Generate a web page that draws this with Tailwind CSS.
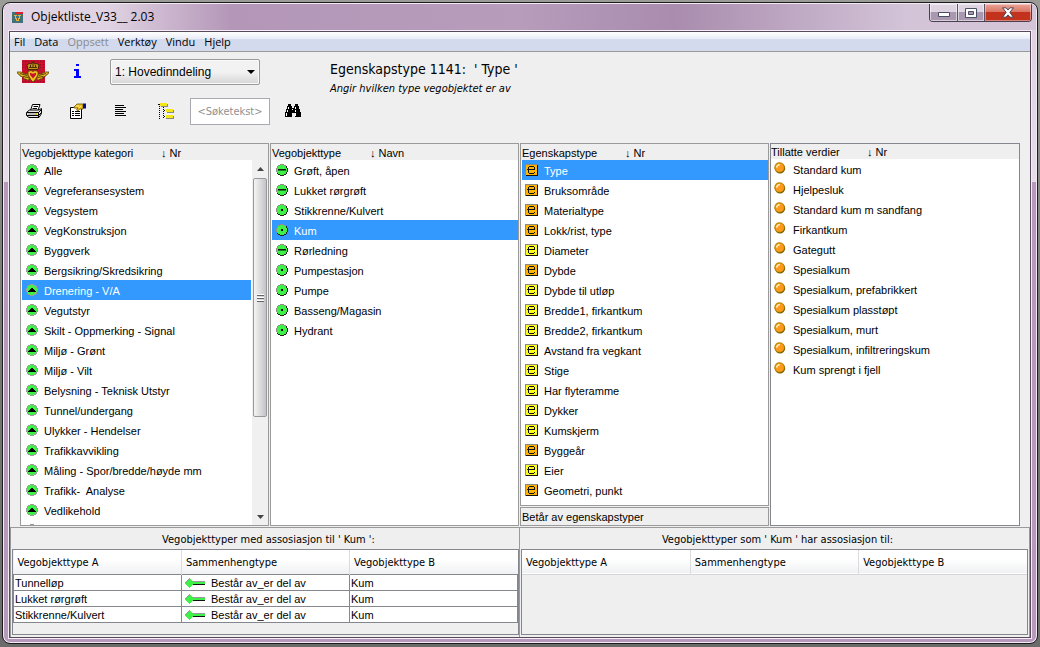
<!DOCTYPE html>
<html lang="no">
<head>
<meta charset="utf-8">
<title>Objektliste_V33__ 2.03</title>
<script src="https://cdn.jsdelivr.net/npm/@tailwindcss/browser@4"></script>
</head>
<body class="flex h-screen flex-col overflow-hidden bg-linear-to-b from-[#9b9b98] via-[#777] to-[#6b6b6b] px-[2px] pt-[2px] pb-[3px] font-['Liberation_Sans',sans-serif] text-[11px] leading-5 text-black">

<svg class="hidden" aria-hidden="true">
  <symbol id="cat" viewBox="0 0 12 12" shape-rendering="crispEdges">
    <path d="M4 0h4v1h2v1h1v2h1v4h-1v2h-1v1H8v1H4v-1H2v-1H1V8H0V4h1V2h1V1h2z" fill="#9c9c9c"/>
    <path d="M4 1h4v1h2v2h1v4h-1v2H8v1H4v-1H2V8H1V4h1V2h2z" fill="#3ff048"/>
    <path d="M5 4h2v1h1v1h1v1h1v1H2V7h1V6h1V5h1z" fill="#000"/>
  </symbol>
  <symbol id="ball" viewBox="0 0 12 12" shape-rendering="crispEdges">
    <path d="M4 0h4v1h2v1h1v2h1v4h-1v2h-1v1H8v1H4v-1H2v-1H1V8H0V4h1V2h1V1h2z" fill="#222"/>
    <path d="M4 0h4v1h2v1H9v1H2v6H1V8H0V4h1V2h1V1h2z" fill="#8d8d8d"/>
    <path d="M4 1h4v1h2v2h1v4h-1v2H8v1H4v-1H2V8H1V4h1V2h2z" fill="#3ff048"/>
  </symbol>
  <symbol id="line" viewBox="0 0 12 12" shape-rendering="crispEdges">
    <use href="#ball"/><path d="M2 5h8v1H2z" fill="#111"/><path d="M2 6h8v1H2z" fill="#1f7a24"/>
  </symbol>
  <symbol id="dot" viewBox="0 0 12 12" shape-rendering="crispEdges">
    <use href="#ball"/><path d="M5 5h2v2H5z" fill="#000"/>
  </symbol>
  <symbol id="e" viewBox="0 0 13 12" shape-rendering="crispEdges">
    <path d="M0 0h13v12H0z" fill="#111"/><path d="M0 0h13v1H1v11H0z" fill="#888"/><path d="M1 1h11v10H1z" fill="currentColor"/>
    <path d="M4 2h5v1H4zM3 3h1v6H3zM9 3h1v3H9zM2 5h8v1H2zM9 8h1v1H9zM4 9h5v1H4z" fill="#111"/>
  </symbol>
  <symbol id="val" viewBox="0 0 12 12">
    <circle cx="6" cy="6.2" r="5.2" fill="#7a6400"/><circle cx="5.4" cy="5.4" r="5.1" fill="#b98800"/><circle cx="5.6" cy="5.7" r="4.1" fill="#ff9a1c"/>
    <path d="M2.6 5.6Q3 3 5.8 2.5" fill="none" stroke="#fff3c4" stroke-width="1.4"/>
  </symbol>
  <symbol id="assoc" viewBox="0 0 22 12" shape-rendering="crispEdges">
    <path d="M9 4h12v1H9z" fill="#999"/><path d="M8 5h13v2H8z" fill="#3ff048"/><path d="M9 7h12v1H9z" fill="#111"/>
    <path d="M5 1h1v1h1v1h1v1h1v1h1v2H9v1H8v1H7v1H6v1H5v-1H4V9H3V8H2V7H1V5h1V4h1V3h1V2h1z" fill="#3ff048"/>
    <path d="M1 5h1V4h1V3h1V2h1V1h1v1H5v1H4v1H3v1H2v1H1z" fill="#999"/>
  </symbol>
</svg>

<div class="flex min-h-0 flex-1 flex-col rounded-lg border border-[#1c1c1c] bg-linear-to-b from-[#ddd0e0] from-0% via-[#e6dde9] via-28% to-[#b79abb] to-28% px-[5px] pb-1 shadow-[inset_0_0_0_1px_#f2ebf4]">

  <!-- Title bar -->
  <header class="-mx-1 mt-px flex h-[26px] shrink-0 items-start overflow-hidden rounded-t-md bg-[#b79cbc]">
    <div class="flex h-full w-full items-start bg-linear-to-r from-[#e0d3e3] from-10% via-[#b497b8] via-22% to-transparent to-50%">
      <svg class="mt-2 ml-2 h-[11px] w-[11px] shrink-0" viewBox="0 0 11 11" shape-rendering="crispEdges" aria-hidden="true">
        <path d="M0 0h11v11H0z" fill="#3f7377"/><path d="M3 0h8v2H3z" fill="#e02030"/><path d="M2 3h3v1H4v2h1v2h1V6h1V4H6V3h3v1H8v3H7v2H4V7H3V4H2z" fill="#e8b040"/>
      </svg>
      <h1 class="ml-2 shrink-0 pt-[3px] font-['Open_Sans',sans-serif] text-xs leading-5">Objektliste_V33__ 2.03</h1>
      <div class="ml-auto flex h-full w-1/2 items-start justify-end bg-linear-to-r from-transparent via-[#a98cae] via-30% to-[#d3c4d8] to-75% pr-1">
        <div class="flex h-[18px] overflow-hidden rounded-b-[4px] border border-t-0 border-[#4b3e50]">
          <button aria-label="Minimer" class="flex w-7 items-center justify-center border-r border-[#5f5164] bg-linear-to-b from-[#ddd3e1] from-50% to-[#aa98b0] to-50% shadow-[inset_0_0_0_1px_#ffffff88]">
            <svg class="mt-1 h-[5px] w-3" viewBox="0 0 12 5"><path d="M.5.5h11v4H.5z" fill="#fff" stroke="#4a4f63"/></svg>
          </button>
          <button aria-label="Maksimer" class="flex w-[27px] items-center justify-center border-r border-[#5f5164] bg-linear-to-b from-[#ddd3e1] from-50% to-[#aa98b0] to-50% shadow-[inset_0_0_0_1px_#ffffff88]">
            <svg class="h-[10px] w-3" viewBox="0 0 12 10"><path d="M.5.5h11v9H.5z" fill="#fff" stroke="#4a4f63"/><path d="M3.5 3.5h5v3h-5z" fill="#aa98b0" stroke="#4a4f63"/></svg>
          </button>
          <button aria-label="Lukk" class="flex w-[46px] items-center justify-center bg-linear-to-b from-[#eaa598] from-0% via-[#d8705f] via-50% to-[#c2321c] to-50% shadow-[inset_0_0_0_1px_#ffffff66]">
            <svg class="h-[11px] w-3" viewBox="0 0 12 11"><path d="M.6.8H4L6 3 8 .8h3.4L7.900 5.400 11.400 10.200H8L6 7.900 4 10.200H.6L4.100 5.400z" fill="#fff" stroke="#4a4556"/></svg>
          </button>
        </div>
      </div>
    </div>
  </header>

  <div class="flex min-h-0 flex-1 flex-col border border-[#f3edf5]">
  <main class="flex min-h-0 flex-1 flex-col border border-[#584a5c] bg-[#efefef]">

    <!-- Menu -->
    <nav class="flex h-5 shrink-0 items-center gap-[9px] border-b border-[#9a9a9a] bg-linear-to-b from-white from-0% via-[#e9edf6] via-35% to-[#d3daee] to-40% pl-1 font-['Open_Sans',sans-serif] text-[11px] leading-4">
      <button>Fil</button><button>Data</button><button disabled class="text-[#8b8b8b]">Oppsett</button><button>Verktøy</button><button>Vindu</button><button>Hjelp</button>
    </nav>

    <!-- Toolbar -->
    <div class="flex h-[91px] shrink-0 pt-[6px]">
      <div class="w-80 shrink-0">
        <div class="flex h-[27px] items-center pl-[7px]">
          <svg class="h-6 w-8" viewBox="0 0 32 24" role="img" aria-label="Statens vegvesen">
            <path d="M5 0h23v23H5z" fill="#c8102e"/>
            <path d="M5 1.500h23M5 4.500h23M5 7.500h23M5 18.500h23M5 21.500h23" stroke="#8d0d22" stroke-dasharray="1 2"/>
            <path d="M0 12h4l4 2h3v2l1 2v2h-2l-1-1H7l-1-2-3-1v-1l-2-1zM32 12h-4l-4 2h-3v2l-1 2v2h2l1-1h2l1-2 3-1v-1l2-1z" fill="#e8b822" stroke="#5c4300" stroke-width=".8"/>
            <path d="M3 13.500l7 2M6 16.500l5 1M29 13.500l-7 2M26 16.500l-5 1" stroke="#4d3800" stroke-width=".9"/>
            <path d="M11 9.500L10 5l2-1.500 2.500.5L16 1.500 17.500 4l2.500-.5L22 5l-1 4.500z" fill="#c4951a" stroke="#3d2200" stroke-width=".9"/>
            <path d="M12 7.500h8M16 2v5M13.500 5v2M18.500 5v2" stroke="#3d2200" stroke-width=".9"/>
            <path d="M11 11.500l3-1 2 1 2-1 3 1v3.500l-3 5-2 2-2-2-3-5z" fill="#f0c020" stroke="#5c4300" stroke-width=".8"/>
            <path d="M13 12.800l3 1 3-1v2L16 18.500 13 14.800z" fill="#c4122f"/>
          </svg>
          <button aria-label="Info" class="ml-[25px]"><svg class="h-4 w-[7px]" viewBox="0 0 7 16" shape-rendering="crispEdges"><path d="M2 0h3v2H2zM0 5h5v7h2v2H0v-2h2V7H0z" fill="#00f"/></svg></button>
          <div class="relative ml-[29px]">
            <select aria-label="Inndeling" class="block h-[26px] w-[150px] appearance-none rounded-[2px] border border-[#9a9a9a] bg-linear-to-b from-[#f2f2f2] from-50% to-[#d6d6d6] pl-1 text-xs shadow-[inset_0_0_0_1px_#fafafa]"><option>1: Hovedinndeling</option></select>
            <svg class="pointer-events-none absolute top-[11px] right-[5px] h-1 w-2" viewBox="0 0 8 4"><path d="M0 0h8L4 4z"/></svg>
          </div>
        </div>
        <div class="mt-[13px] flex h-[27px] items-center pl-4">
          <button aria-label="Skriv ut"><svg class="mb-px h-4 w-4" viewBox="0 0 16 16">
            <path d="M4.500 7.500L6.500 1.500h7.500L12 7.500z" fill="#fff" stroke="#000"/><path d="M7.500 3.500h4.500M6.500 5.500h4.500" stroke="#000"/>
            <path d="M.5 9.500l3-2.500h9.500l2.500-1.500v5l-2.500 4H3l-2.500-2z" fill="#e4e4e4" stroke="#000"/>
            <path d="M1 9.500h11.500l2.500-2.500M1 12.500h11.500l2.500-2.500M12.500 9.500v5" fill="none" stroke="#000"/><path d="M2 11h7" stroke="#999"/><path d="M9 11h2" stroke="#d8b800" stroke-width="1.500"/>
          </svg></button>
          <button aria-label="Egenskaper" class="ml-7"><svg class="mb-px h-4 w-4" viewBox="0 0 16 16">
            <path d="M.5 4.500h11v11H.5z" fill="#fff" stroke="#000"/><path d="M2 8.500h2M2 10.500h2M2 12.500h2M5 8.500h5M5 10.500h5M5 12.500h5" stroke="#000"/>
            <path d="M4 4l3-3h6v5H9.500L8 8 6.500 7 8 5H4z" fill="#f2c21a" stroke="#6a5200" stroke-width=".8"/><path d="M6 3h3M9 5l2-2" stroke="#fff1a0" stroke-width=".8"/><path d="M13 .5h3v5h-3z" fill="#00108c"/>
          </svg></button>
          <button aria-label="Liste" class="ml-7"><svg class="mb-px h-4 w-4" viewBox="0 0 16 16" shape-rendering="crispEdges"><path d="M1 2h9v1H1zM1 4h11v1H1zM1 6h8v1H1zM1 8h11v1H1zM1 10h9v1H1zM1 12h11v1H1z"/></svg></button>
          <button aria-label="Tre" class="ml-7"><svg class="mb-px h-4 w-4" viewBox="0 0 16 16" shape-rendering="crispEdges">
            <path d="M1.500 1v15M5.500 4v11" stroke="#000" stroke-dasharray="1 1"/><path d="M0 1.500h3M6 7.500h2M6 13.500h2" stroke="#000" stroke-dasharray="1 1"/>
            <path d="M3 1h7v3H3zM9 7h7v3H9zM8 13h8v3H8z" fill="#888"/><path d="M2 0h7v3H2zM8 6h7v3H8zM8 12h7v3H8z" fill="#f5e616"/>
          </svg></button>
          <input type="text" aria-label="Søketekst" placeholder="&lt;Søketekst&gt;" class="ml-4 h-[27px] w-20 border border-[#a9a9b0] bg-white px-1 text-center font-['DejaVu_Sans_Condensed','DejaVu_Sans',sans-serif] text-[11px] placeholder:text-[#909090]">
          <button aria-label="Søk" class="ml-[15px]"><svg class="mb-px h-[14px] w-4" viewBox="0 0 16 14" shape-rendering="crispEdges">
            <path d="M3 0h3v2h1v2h2V2h1V0h3v2h1v3h1v3h1v5h-6V9H7v4H0V8h1V5h1V2h1z"/><path d="M3 3h1v2H3zM2 6h1v2H2zM1 9h1v3H1zM10 3h1v2h-1zM10 6h1v2h-1zM10 9h1v3h-1zM7 5h1v1H7z" fill="#fff"/>
          </svg></button>
        </div>
      </div>
      <div class="font-['DejaVu_Sans_Condensed','DejaVu_Sans',sans-serif]">
        <h2 class="pt-px text-sm leading-5 whitespace-pre">Egenskapstype 1141:  ' Type '</h2>
        <p class="text-[11px] leading-5 italic">Angir hvilken type vegobjektet er av</p>
      </div>
    </div>

    <!-- Object lists -->
    <div class="grid min-h-0 flex-1 grid-cols-4 px-[10px] [&_button]:flex [&_button]:h-5 [&_button]:w-full [&_button]:items-center [&_button]:gap-[6px] [&_button]:pt-px [&_button]:pl-1 [&_button]:text-left [&_button]:whitespace-pre [&_li_svg]:mb-[2px] [&_li_svg]:h-3 [&_li_svg]:w-3 [&_li_svg]:shrink-0">

      <section class="mr-px flex min-h-0 flex-col border border-[#9a9a9a]">
        <h3 class="flex h-4 shrink-0 items-center pt-px pl-px"><span class="w-[139px]">Vegobjekttype kategori</span><span>↓ Nr</span></h3>
        <div class="flex min-h-0 flex-1 bg-white pl-px">
          <ul class="min-w-0 flex-1 overflow-hidden">
            <li><button><svg><use href="#cat"/></svg>Alle</button></li>
            <li><button><svg><use href="#cat"/></svg>Vegreferansesystem</button></li>
            <li><button><svg><use href="#cat"/></svg>Vegsystem</button></li>
            <li><button><svg><use href="#cat"/></svg>VegKonstruksjon</button></li>
            <li><button><svg><use href="#cat"/></svg>Byggverk</button></li>
            <li><button><svg><use href="#cat"/></svg>Bergsikring/Skredsikring</button></li>
            <li class="bg-[#3399ff] text-white"><button><svg><use href="#cat"/></svg>Drenering - V/A</button></li>
            <li><button><svg><use href="#cat"/></svg>Vegutstyr</button></li>
            <li><button><svg><use href="#cat"/></svg>Skilt - Oppmerking - Signal</button></li>
            <li><button><svg><use href="#cat"/></svg>Miljø - Grønt</button></li>
            <li><button><svg><use href="#cat"/></svg>Miljø - Vilt</button></li>
            <li><button><svg><use href="#cat"/></svg>Belysning - Teknisk Utstyr</button></li>
            <li><button><svg><use href="#cat"/></svg>Tunnel/undergang</button></li>
            <li><button><svg><use href="#cat"/></svg>Ulykker - Hendelser</button></li>
            <li><button><svg><use href="#cat"/></svg>Trafikkavvikling</button></li>
            <li><button><svg><use href="#cat"/></svg>Måling - Spor/bredde/høyde mm</button></li>
            <li><button><svg><use href="#cat"/></svg>Trafikk-  Analyse</button></li>
            <li><button><svg><use href="#cat"/></svg>Vedlikehold</button></li>
            <li><button aria-label="Neste kategori"><svg><use href="#cat"/></svg></button></li>
          </ul>
          <div class="ml-px flex w-4 flex-col items-center bg-[#f0f0f0]" aria-hidden="true">
            <svg class="my-[7px] h-1 w-[7px] shrink-0" viewBox="0 0 7 4"><path d="M0 4h7L3.500 0z" fill="#444"/></svg>
            <div class="flex h-[239px] w-[14px] shrink-0 flex-col items-center justify-center gap-px rounded-[2px] border border-[#989898] bg-linear-to-r from-[#f4f4f4] via-[#dcdcdf] to-[#c4c4c8]">
              <i class="h-[2px] w-[7px] border-b border-[#666] bg-white"></i><i class="h-[2px] w-[7px] border-b border-[#666] bg-white"></i><i class="h-[2px] w-[7px] border-b border-[#666] bg-white"></i>
            </div>
            <svg class="mt-auto mb-[6px] h-1 w-[7px] shrink-0" viewBox="0 0 7 4"><path d="M0 0h7L3.500 4z" fill="#444"/></svg>
          </div>
        </div>
      </section>

      <section class="mr-px flex min-h-0 flex-col border border-[#9a9a9a]">
        <h3 class="flex h-4 shrink-0 items-center pt-px pl-px"><span class="w-[98px]">Vegobjekttype</span><span>↓ Navn</span></h3>
        <ul class="min-h-0 flex-1 overflow-hidden bg-white pl-px">
          <li><button><svg><use href="#line"/></svg>Grøft, åpen</button></li>
          <li><button><svg><use href="#line"/></svg>Lukket rørgrøft</button></li>
          <li><button><svg><use href="#dot"/></svg>Stikkrenne/Kulvert</button></li>
          <li class="bg-[#3399ff] text-white"><button><svg><use href="#dot"/></svg>Kum</button></li>
          <li><button><svg><use href="#line"/></svg>Rørledning</button></li>
          <li><button><svg><use href="#dot"/></svg>Pumpestasjon</button></li>
          <li><button><svg><use href="#dot"/></svg>Pumpe</button></li>
          <li><button><svg><use href="#dot"/></svg>Basseng/Magasin</button></li>
          <li><button><svg><use href="#dot"/></svg>Hydrant</button></li>
        </ul>
      </section>

      <div class="mr-px flex min-h-0 flex-col gap-px [&_li_svg]:w-[13px]! [&_button]:pl-[3px]!">
        <section class="flex min-h-0 flex-1 flex-col border border-[#9a9a9a]">
          <h3 class="flex h-4 shrink-0 items-center pt-px pl-px"><span class="w-[103px]">Egenskapstype</span><span>↓ Nr</span></h3>
          <ul class="min-h-0 flex-1 overflow-hidden bg-white pl-px">
            <li class="bg-[#3399ff] text-white"><button><svg class="text-[#ffb400]"><use href="#e"/></svg>Type</button></li>
            <li><button><svg class="text-[#ffb400]"><use href="#e"/></svg>Bruksområde</button></li>
            <li><button><svg class="text-[#ffb400]"><use href="#e"/></svg>Materialtype</button></li>
            <li><button><svg class="text-[#ffb400]"><use href="#e"/></svg>Lokk/rist, type</button></li>
            <li><button><svg class="text-[#ffff1e]"><use href="#e"/></svg>Diameter</button></li>
            <li><button><svg class="text-[#ffb400]"><use href="#e"/></svg>Dybde</button></li>
            <li><button><svg class="text-[#ffff1e]"><use href="#e"/></svg>Dybde til utløp</button></li>
            <li><button><svg class="text-[#ffff1e]"><use href="#e"/></svg>Bredde1, firkantkum</button></li>
            <li><button><svg class="text-[#ffff1e]"><use href="#e"/></svg>Bredde2, firkantkum</button></li>
            <li><button><svg class="text-[#ffff1e]"><use href="#e"/></svg>Avstand fra vegkant</button></li>
            <li><button><svg class="text-[#ffff1e]"><use href="#e"/></svg>Stige</button></li>
            <li><button><svg class="text-[#ffff1e]"><use href="#e"/></svg>Har flyteramme</button></li>
            <li><button><svg class="text-[#ffff1e]"><use href="#e"/></svg>Dykker</button></li>
            <li><button><svg class="text-[#ffff1e]"><use href="#e"/></svg>Kumskjerm</button></li>
            <li><button><svg class="text-[#ffb400]"><use href="#e"/></svg>Byggeår</button></li>
            <li><button><svg class="text-[#ffff1e]"><use href="#e"/></svg>Eier</button></li>
            <li><button><svg class="text-[#ffb400]"><use href="#e"/></svg>Geometri, punkt</button></li>
          </ul>
        </section>
        <h3 class="flex h-[19px] shrink-0 items-center border border-[#9a9a9a] pt-px pl-px">Betår av egenskapstyper</h3>
      </div>

      <section class="flex min-h-0 flex-col border border-[#84888e] [&_button]:gap-[7px]! [&_button]:pl-[3px]! [&_li_svg]:mb-1!">
        <h3 class="flex h-[15px] shrink-0 items-center pt-px"><span class="w-[96px]">Tillatte verdier</span><span>↓ Nr</span></h3>
        <ul class="min-h-0 flex-1 overflow-hidden bg-white">
          <li><button><svg><use href="#val"/></svg>Standard kum</button></li>
          <li><button><svg><use href="#val"/></svg>Hjelpesluk</button></li>
          <li><button><svg><use href="#val"/></svg>Standard kum m sandfang</button></li>
          <li><button><svg><use href="#val"/></svg>Firkantkum</button></li>
          <li><button><svg><use href="#val"/></svg>Gategutt</button></li>
          <li><button><svg><use href="#val"/></svg>Spesialkum</button></li>
          <li><button><svg><use href="#val"/></svg>Spesialkum, prefabrikkert</button></li>
          <li><button><svg><use href="#val"/></svg>Spesialkum plasstøpt</button></li>
          <li><button><svg><use href="#val"/></svg>Spesialkum, murt</button></li>
          <li><button><svg><use href="#val"/></svg>Spesialkum, infiltreringskum</button></li>
          <li><button><svg><use href="#val"/></svg>Kum sprengt i fjell</button></li>
        </ul>
      </section>
    </div>

    <!-- Associations -->
    <div class="mt-px grid h-[110px] shrink-0 grid-cols-2 border-t border-[#9a9a9a]">
      <section class="flex flex-col border-x border-[#9a9a9a] pb-[2px] pl-px">
        <h3 class="pt-[2px] pl-[6px] text-center font-['DejaVu_Sans_Condensed','DejaVu_Sans',sans-serif] leading-[19px]">Vegobjekttyper med assosiasjon til ' Kum ':</h3>
        <div class="flex-1 border border-[#84888e]">
          <table class="w-full table-fixed border-collapse text-left leading-[14px] [&_td]:border [&_td]:border-[#84888e] [&_td]:bg-white [&_td]:p-0 [&_td]:pt-px [&_td]:pl-px [&_th]:pt-[3px]">
            <thead class="font-['DejaVu_Sans_Condensed','DejaVu_Sans',sans-serif]"><tr class="h-6 bg-linear-to-b from-white from-40% to-[#f0f1f3]">
              <th class="border-r border-[#dcdcdf] pl-1 font-normal">Vegobjekttype A</th><th class="border-r border-[#dcdcdf] pl-1 font-normal">Sammenhengtype</th><th class="pl-1 font-normal">Vegobjekttype B</th>
            </tr></thead>
            <tbody>
              <tr><td>Tunnelløp</td><td><span class="flex items-center gap-[5px] pl-px"><svg class="h-3 w-[22px]"><use href="#assoc"/></svg>Består av_er del av</span></td><td>Kum</td></tr>
              <tr><td>Lukket rørgrøft</td><td><span class="flex items-center gap-[5px] pl-px"><svg class="h-3 w-[22px]"><use href="#assoc"/></svg>Består av_er del av</span></td><td>Kum</td></tr>
              <tr><td>Stikkrenne/Kulvert</td><td><span class="flex items-center gap-[5px] pl-px"><svg class="h-3 w-[22px]"><use href="#assoc"/></svg>Består av_er del av</span></td><td>Kum</td></tr>
            </tbody>
          </table>
        </div>
      </section>
      <section class="flex flex-col border-r border-[#9a9a9a] pr-px pb-[2px] pl-px">
        <h3 class="pt-[2px] pl-[6px] text-center font-['DejaVu_Sans_Condensed','DejaVu_Sans',sans-serif] leading-[19px]">Vegobjekttyper som ' Kum ' har assosiasjon til:</h3>
        <div class="flex-1 border border-[#84888e]">
          <table class="w-full table-fixed border-collapse text-left leading-[14px] [&_th]:pt-[3px]">
            <thead class="font-['DejaVu_Sans_Condensed','DejaVu_Sans',sans-serif]"><tr class="h-6 border-b border-[#d5d5d8] bg-linear-to-b from-white from-40% to-[#f0f1f3]">
              <th class="border-r border-[#dcdcdf] pl-1 font-normal">Vegobjekttype A</th><th class="border-r border-[#dcdcdf] pl-1 font-normal">Sammenhengtype</th><th class="pl-1 font-normal">Vegobjekttype B</th>
            </tr></thead>
          </table>
        </div>
      </section>
    </div>
  </main>
  </div>
</div>
</body>
</html>
